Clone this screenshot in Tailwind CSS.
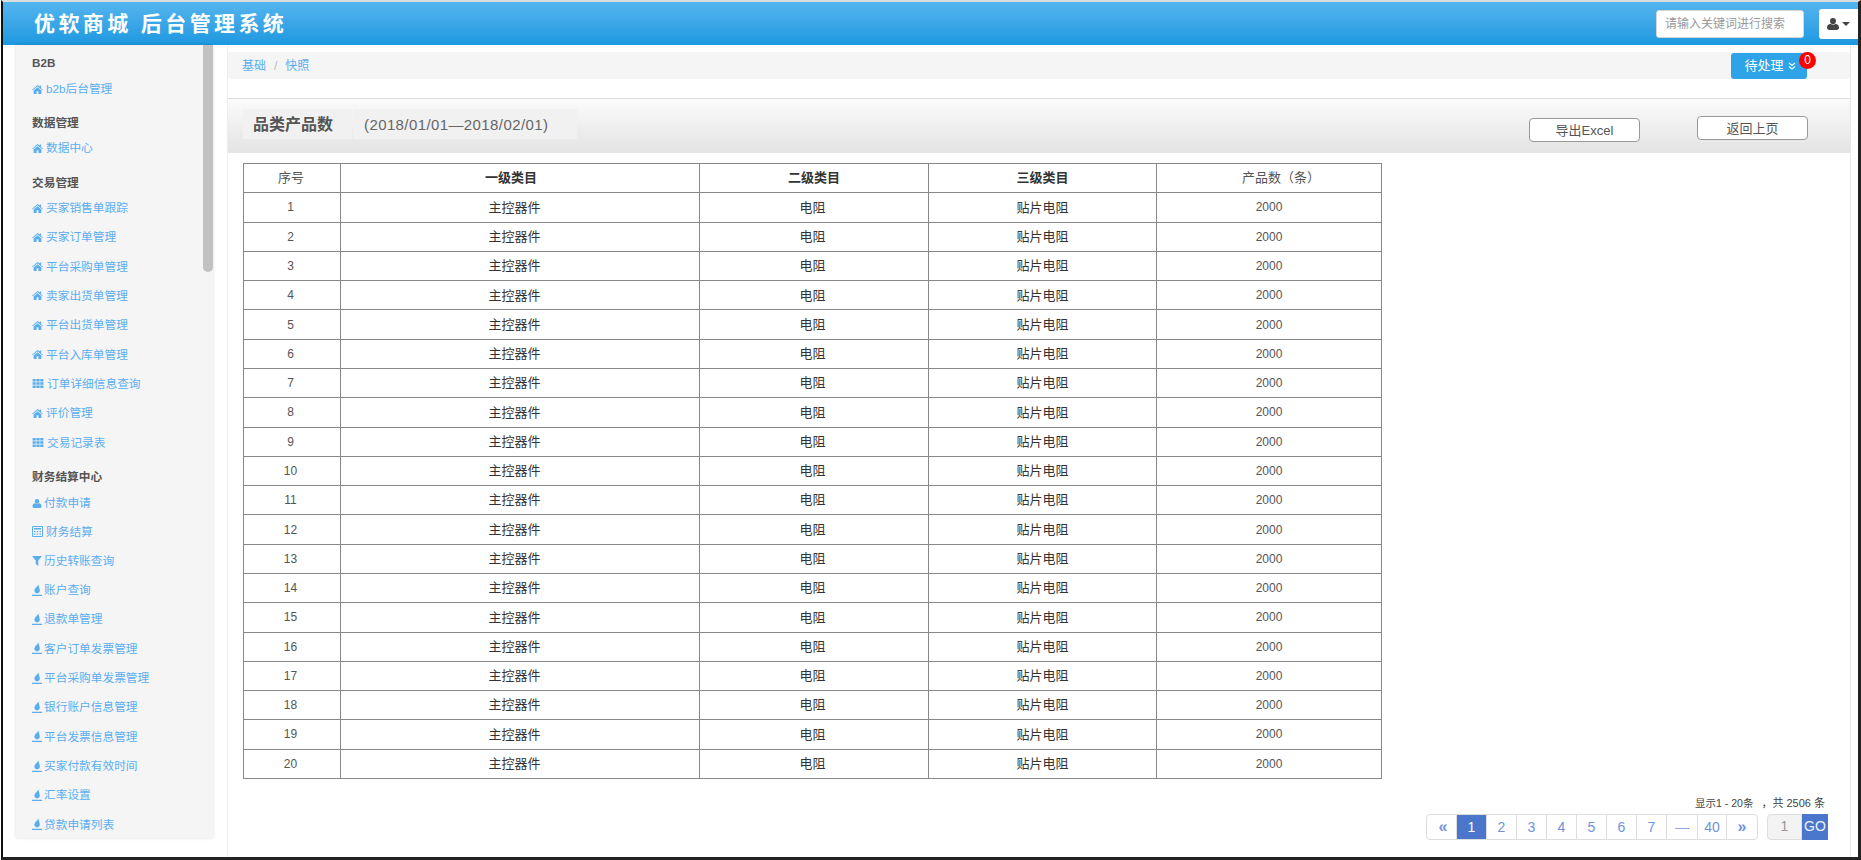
<!DOCTYPE html>
<html lang="zh-CN">
<head>
<meta charset="utf-8">
<title>优软商城 后台管理系统</title>
<script src="https://cdn.jsdelivr.net/npm/@tailwindcss/browser@4"></script>
</head>
<body class="bg-white">
<svg width="0" height="0" class="absolute">
  <symbol id="home" viewBox="0 0 12 10"><path fill="currentColor" d="M6 0 0 5.2l.7.7L6 1.5l5.3 4.4.7-.7-2-1.700V.6H8.700v1.100zM1.700 6v4h3.300V7h2v3h3.300V6L6 2.400z"/></symbol>
  <symbol id="grid" viewBox="0 0 12 10"><path fill="currentColor" d="M0 0h3.500v2.800H0zM4.200 0h3.600v2.800H4.200zM8.500 0H12v2.800H8.500zM0 3.600h3.500v2.800H0zM4.200 3.600h3.600v2.800H4.200zM8.500 3.600H12v2.800H8.500zM0 7.200h3.500V10H0zM4.200 7.200h3.600V10H4.200zM8.500 7.200H12V10H8.500z"/></symbol>
  <symbol id="user" viewBox="0 0 10 10"><path fill="currentColor" d="M5 0a2.500 2.500 0 0 1 2.500 2.500c0 1.300-1 2.700-2.500 2.700S2.500 3.800 2.500 2.500A2.500 2.500 0 0 1 5 0zM3 4.800c.5.500 1.200.9 2 .9s1.500-.4 2-.9c1.800.2 3 1.300 3 3.200 0 1.300-.8 2-2 2H2c-1.200 0-2-.7-2-2 0-1.900 1.200-3 3-3.200z"/></symbol>
  <symbol id="calc" viewBox="0 0 11 11"><path fill="none" stroke="currentColor" d="M.5.500h10v10H.5z"/><path fill="currentColor" d="M2 2h7v1.500H2zM2 5h1.500v1.300H2zM4.700 5h1.500v1.300H4.700zM7.500 5H9v1.300H7.500zM2 7.500h1.500v1.300H2zM4.700 7.500h1.500v1.300H4.700zM7.500 7.500H9v1.300H7.500z"/></symbol>
  <symbol id="filter" viewBox="0 0 10 10"><path fill="currentColor" d="M0 0h10L6.300 4.500V10L3.700 8V4.500z"/></symbol>
  <symbol id="drop" viewBox="0 0 10 12"><path fill="currentColor" d="M6.500 0C6.500 2.200 2.400 3.800 2.400 6.700c0 1.500 1.200 2.600 2.700 2.600s2.700-1.100 2.700-2.600C7.800 4.500 6.500 2.500 6.500 0zM0 10.700h10V12H0z"/></symbol>
</svg>

<div class="h-[860px] w-[1861px] overflow-hidden flex flex-col bg-white pl-px font-['Liberation_Sans','Noto_Sans_CJK_SC',sans-serif]">
  <div class="flex-1 min-h-0 flex flex-col border-l-2 border-r-[3px] border-b-[3px] border-l-[#111] border-r-[#222] border-b-[#222] border-t-2 border-t-[#d8dde0]">
    <!-- header -->
    <header class="h-[43px] shrink-0 bg-gradient-to-b from-[#53b5ee] to-[#1b98e0] flex items-center justify-between pl-[31px]">
      <h1 class="text-[21px] leading-none font-bold tracking-[3.400px] text-white whitespace-pre">优软商城 后台管理系统</h1>
      <div class="flex items-center">
        <input placeholder="请输入关键词进行搜索" class="w-[148px] h-[28px] bg-white border border-[#d5d5d5] rounded-[3px] px-2 text-[12px] text-[#555] placeholder:text-[#999]">
        <button class="ml-[15px] w-[39px] h-[30px] bg-white rounded-l-[3px] flex items-center justify-center gap-[3px] text-[#444]">
          <svg class="w-[12px] h-[12px]"><use href="#user"/></svg>
          <span class="w-0 h-0 border-x-[4px] border-x-transparent border-t-[4px] border-t-[#444]"></span>
        </button>
      </div>
    </header>

    <div class="flex-1 min-h-0 flex">
      <!-- sidebar -->
      <aside class="w-[224px] shrink-0 pl-[13px]">
        <div class="relative w-[197px] h-[793px] bg-[#f5f5f5] shadow-[0_0_3px_rgba(0,0,0,0.15)] pl-[16px] pt-[4px] text-[11.700px] text-[#5aaef0]">
          <div class="absolute right-0 top-0 w-[10px] h-[227px] bg-[#c1c1c1] rounded-b-[5px]"></div>

          <h3 class="h-[28px] flex items-center font-bold text-[#555]">B2B</h3>
          <a class="h-[24px] flex items-center gap-[3px]"><svg class="w-[11px] h-[9px]"><use href="#home"/></svg>b2b后台管理</a>

          <h3 class="h-[30px] mt-[7px] flex items-center font-bold text-[#555]">数据管理</h3>
          <a class="h-[20px] flex items-center gap-[3px]"><svg class="w-[11px] h-[9px]"><use href="#home"/></svg>数据中心</a>

          <h3 class="h-[30px] mt-[10px] flex items-center font-bold text-[#555]">交易管理</h3>
          <a class="h-[20px] mb-[4.500px] flex items-center gap-[3px]"><svg class="w-[11px] h-[9px]"><use href="#home"/></svg>买家销售单跟踪</a>
          <a class="h-[29.350px] flex items-center gap-[3px]"><svg class="w-[11px] h-[9px]"><use href="#home"/></svg>买家订单管理</a>
          <a class="h-[29.350px] flex items-center gap-[3px]"><svg class="w-[11px] h-[9px]"><use href="#home"/></svg>平台采购单管理</a>
          <a class="h-[29.350px] flex items-center gap-[3px]"><svg class="w-[11px] h-[9px]"><use href="#home"/></svg>卖家出货单管理</a>
          <a class="h-[29.350px] flex items-center gap-[3px]"><svg class="w-[11px] h-[9px]"><use href="#home"/></svg>平台出货单管理</a>
          <a class="h-[29.350px] flex items-center gap-[3px]"><svg class="w-[11px] h-[9px]"><use href="#home"/></svg>平台入库单管理</a>
          <a class="h-[29.350px] flex items-center gap-[3px]"><svg class="w-[12px] h-[9px]"><use href="#grid"/></svg>订单详细信息查询</a>
          <a class="h-[29.350px] flex items-center gap-[3px]"><svg class="w-[11px] h-[9px]"><use href="#home"/></svg>评价管理</a>
          <a class="h-[29.350px] flex items-center gap-[3px]"><svg class="w-[12px] h-[9px]"><use href="#grid"/></svg>交易记录表</a>

          <h3 class="h-[29px] mt-[5px] flex items-center font-bold text-[#555]">财务结算中心</h3>
          <a class="h-[24px] flex items-center gap-[2px]"><svg class="w-[10px] h-[9px]"><use href="#user"/></svg>付款申请</a>
          <a class="h-[31px] mt-px flex items-center gap-[3px]"><svg class="w-[11px] h-[11px]"><use href="#calc"/></svg>财务结算</a>
          <a class="h-[28px] flex items-center gap-[2px]"><svg class="w-[10px] h-[10px]"><use href="#filter"/></svg>历史转账查询</a>
          <a class="h-[29.300px] flex items-center gap-[2px]"><svg class="w-[10px] h-[12px]"><use href="#drop"/></svg>账户查询</a>
          <a class="h-[29.300px] flex items-center gap-[2px]"><svg class="w-[10px] h-[12px]"><use href="#drop"/></svg>退款单管理</a>
          <a class="h-[29.300px] flex items-center gap-[2px]"><svg class="w-[10px] h-[12px]"><use href="#drop"/></svg>客户订单发票管理</a>
          <a class="h-[29.300px] flex items-center gap-[2px]"><svg class="w-[10px] h-[12px]"><use href="#drop"/></svg>平台采购单发票管理</a>
          <a class="h-[29.300px] flex items-center gap-[2px]"><svg class="w-[10px] h-[12px]"><use href="#drop"/></svg>银行账户信息管理</a>
          <a class="h-[29.300px] flex items-center gap-[2px]"><svg class="w-[10px] h-[12px]"><use href="#drop"/></svg>平台发票信息管理</a>
          <a class="h-[29.300px] flex items-center gap-[2px]"><svg class="w-[10px] h-[12px]"><use href="#drop"/></svg>买家付款有效时间</a>
          <a class="h-[29.300px] flex items-center gap-[2px]"><svg class="w-[10px] h-[12px]"><use href="#drop"/></svg>汇率设置</a>
          <a class="h-[29.300px] flex items-center gap-[2px]"><svg class="w-[10px] h-[12px]"><use href="#drop"/></svg>贷款申请列表</a>
        </div>
      </aside>

      <!-- main -->
      <main class="w-[1624px] shrink-0 flex flex-col border-r border-[#e8e8e8] border-l border-l-[#eee]">
        <nav class="mt-[7px] h-[27px] bg-[#f5f5f5] rounded-[3px] flex items-center justify-between pl-[14px] pr-[43px] text-[12px]">
          <div class="flex items-center"><a class="text-[#5aaef0]">基础</a><span class="mx-[8px] text-[#bbb]">/</span><a class="text-[#5aaef0]">快照</a></div>
          <div class="relative">
            <button class="w-[76px] h-[26px] bg-[#2ea3e8] rounded-[3px] pl-[2px] text-white text-[13px] flex items-center justify-center gap-[4px]">待处理
              <svg class="w-[8px] h-[8px]" viewBox="0 0 8 8"><path fill="none" stroke="#dff" stroke-width="1.300" d="m1 1 3 2.500L7 1M1 4.500 4 7l3-2.500"/></svg>
            </button>
            <span class="absolute -top-px -right-[9px] w-[17px] h-[17px] rounded-full bg-[#f00] text-white text-[12px] leading-[17px] text-center">0</span>
          </div>
        </nav>

        <section class="mt-[19px] flex-1 min-h-0 flex flex-col border-t border-[#ddd]">
          <div class="h-[54px] shrink-0 bg-gradient-to-b from-[#fbfbfb] to-[#e3e3e3] flex items-start pl-[15px] pr-[42px] relative">
            <div class="mt-[10px] flex h-[30px]">
              <div class="w-[109px] bg-[#f1f1f1] flex items-center pl-[10px] pt-[2px] text-[16px] font-bold text-[#555] leading-none">品类产品数</div>
              <div class="ml-px w-[224px] bg-[#f1f1f1] flex items-center pl-[11px] text-[15px] text-[#666] tracking-[0.4px] leading-none whitespace-nowrap">(2018/01/01—2018/02/01)</div>
            </div>
            <div class="ml-auto flex items-start gap-[57px]">
              <button class="mt-[19px] w-[111px] h-[24px] bg-white border border-[#999] rounded-[4px] text-[13px] text-[#555] leading-none">导出Excel</button>
              <button class="mt-[17px] w-[111px] h-[24px] bg-white border border-[#999] rounded-[4px] text-[13px] text-[#555] leading-none">返回上页</button>
            </div>
          </div>

          <div class="pl-[15px] pt-[10px]">
            <table class="w-[1138px] table-fixed border-collapse text-[13px] text-center text-[#333] [&_td]:border [&_td]:border-[#888] [&_td]:p-0 [&_th]:border [&_th]:border-[#888] [&_th]:p-0 [&_th]:font-normal [&_tr]:h-[29.290px] [&_td:nth-child(1)]:pr-[3px] [&_td:nth-child(2)]:pr-[11px] [&_td:nth-child(3)]:pr-[3px] [&_td:nth-child(1)]:text-[12px] [&_td:nth-child(1)]:text-[#555] [&_td:nth-child(5)]:text-[12px] [&_td:nth-child(5)]:text-[#555]">
              <colgroup><col class="w-[97px]"><col class="w-[359px]"><col class="w-[229px]"><col class="w-[228px]"><col class="w-[225px]"></colgroup>
              <thead>
                <tr><th class="text-[#555] !pr-[2px]">序号</th><th class="!font-bold !pr-[18px]">一级类目</th><th class="!font-bold">二级类目</th><th class="!font-bold">三级类目</th><th class="text-[#555] !pl-[24px]">产品数（条）</th></tr>
              </thead>
              <tbody>
                <tr><td>1</td><td>主控器件</td><td>电阻</td><td>贴片电阻</td><td>2000</td></tr>
                <tr><td>2</td><td>主控器件</td><td>电阻</td><td>贴片电阻</td><td>2000</td></tr>
                <tr><td>3</td><td>主控器件</td><td>电阻</td><td>贴片电阻</td><td>2000</td></tr>
                <tr><td>4</td><td>主控器件</td><td>电阻</td><td>贴片电阻</td><td>2000</td></tr>
                <tr><td>5</td><td>主控器件</td><td>电阻</td><td>贴片电阻</td><td>2000</td></tr>
                <tr><td>6</td><td>主控器件</td><td>电阻</td><td>贴片电阻</td><td>2000</td></tr>
                <tr><td>7</td><td>主控器件</td><td>电阻</td><td>贴片电阻</td><td>2000</td></tr>
                <tr><td>8</td><td>主控器件</td><td>电阻</td><td>贴片电阻</td><td>2000</td></tr>
                <tr><td>9</td><td>主控器件</td><td>电阻</td><td>贴片电阻</td><td>2000</td></tr>
                <tr><td>10</td><td>主控器件</td><td>电阻</td><td>贴片电阻</td><td>2000</td></tr>
                <tr><td>11</td><td>主控器件</td><td>电阻</td><td>贴片电阻</td><td>2000</td></tr>
                <tr><td>12</td><td>主控器件</td><td>电阻</td><td>贴片电阻</td><td>2000</td></tr>
                <tr><td>13</td><td>主控器件</td><td>电阻</td><td>贴片电阻</td><td>2000</td></tr>
                <tr><td>14</td><td>主控器件</td><td>电阻</td><td>贴片电阻</td><td>2000</td></tr>
                <tr><td>15</td><td>主控器件</td><td>电阻</td><td>贴片电阻</td><td>2000</td></tr>
                <tr><td>16</td><td>主控器件</td><td>电阻</td><td>贴片电阻</td><td>2000</td></tr>
                <tr><td>17</td><td>主控器件</td><td>电阻</td><td>贴片电阻</td><td>2000</td></tr>
                <tr><td>18</td><td>主控器件</td><td>电阻</td><td>贴片电阻</td><td>2000</td></tr>
                <tr><td>19</td><td>主控器件</td><td>电阻</td><td>贴片电阻</td><td>2000</td></tr>
                <tr><td>20</td><td>主控器件</td><td>电阻</td><td>贴片电阻</td><td>2000</td></tr>
              </tbody>
            </table>
          </div>

          <div class="mt-[17px] pr-[22px] flex justify-end text-[11px] text-[#444] leading-[14px] whitespace-pre">
            <span class="text-[10.500px]">显示1 - 20条</span><span class="ml-[8px] mr-[3px]">，共 2506 条</span>
          </div>
          <div class="mt-[4px] pr-[22px] flex justify-end">
            <ul class="flex h-[26px] border border-[#ddd] rounded-[4px] text-[14px] text-[#6f93dc] overflow-hidden [&_li]:flex [&_li]:items-center [&_li]:justify-center [&_li]:border-r [&_li]:border-[#ddd] [&_li]:pt-px">
              <li class="w-[30px] font-bold text-[16px] pl-[3px]">«</li>
              <li class="w-[30px] bg-[#4a76cc] text-white">1</li>
              <li class="w-[30px]">2</li><li class="w-[30px]">3</li><li class="w-[30px]">4</li><li class="w-[30px]">5</li><li class="w-[30px]">6</li><li class="w-[30px]">7</li>
              <li class="w-[31px] text-[10px] tracking-[-0.5px]">-----</li>
              <li class="w-[29px]">40</li>
              <li class="w-[30px] !border-r-0 font-bold text-[16px]">»</li>
            </ul>
            <div class="ml-[9px] flex h-[26px]">
              <span class="w-[35px] bg-[#f3f3f3] border border-[#ddd] rounded-l-[4px] text-[14px] text-[#999] flex items-center justify-center">1</span>
              <span class="w-[26px] bg-[#4a76cc] text-white/90 text-[14px] flex items-center justify-center">GO</span>
            </div>
          </div>
        </section>
      </main>
    </div>
  </div>
</div>
</body>
</html>
